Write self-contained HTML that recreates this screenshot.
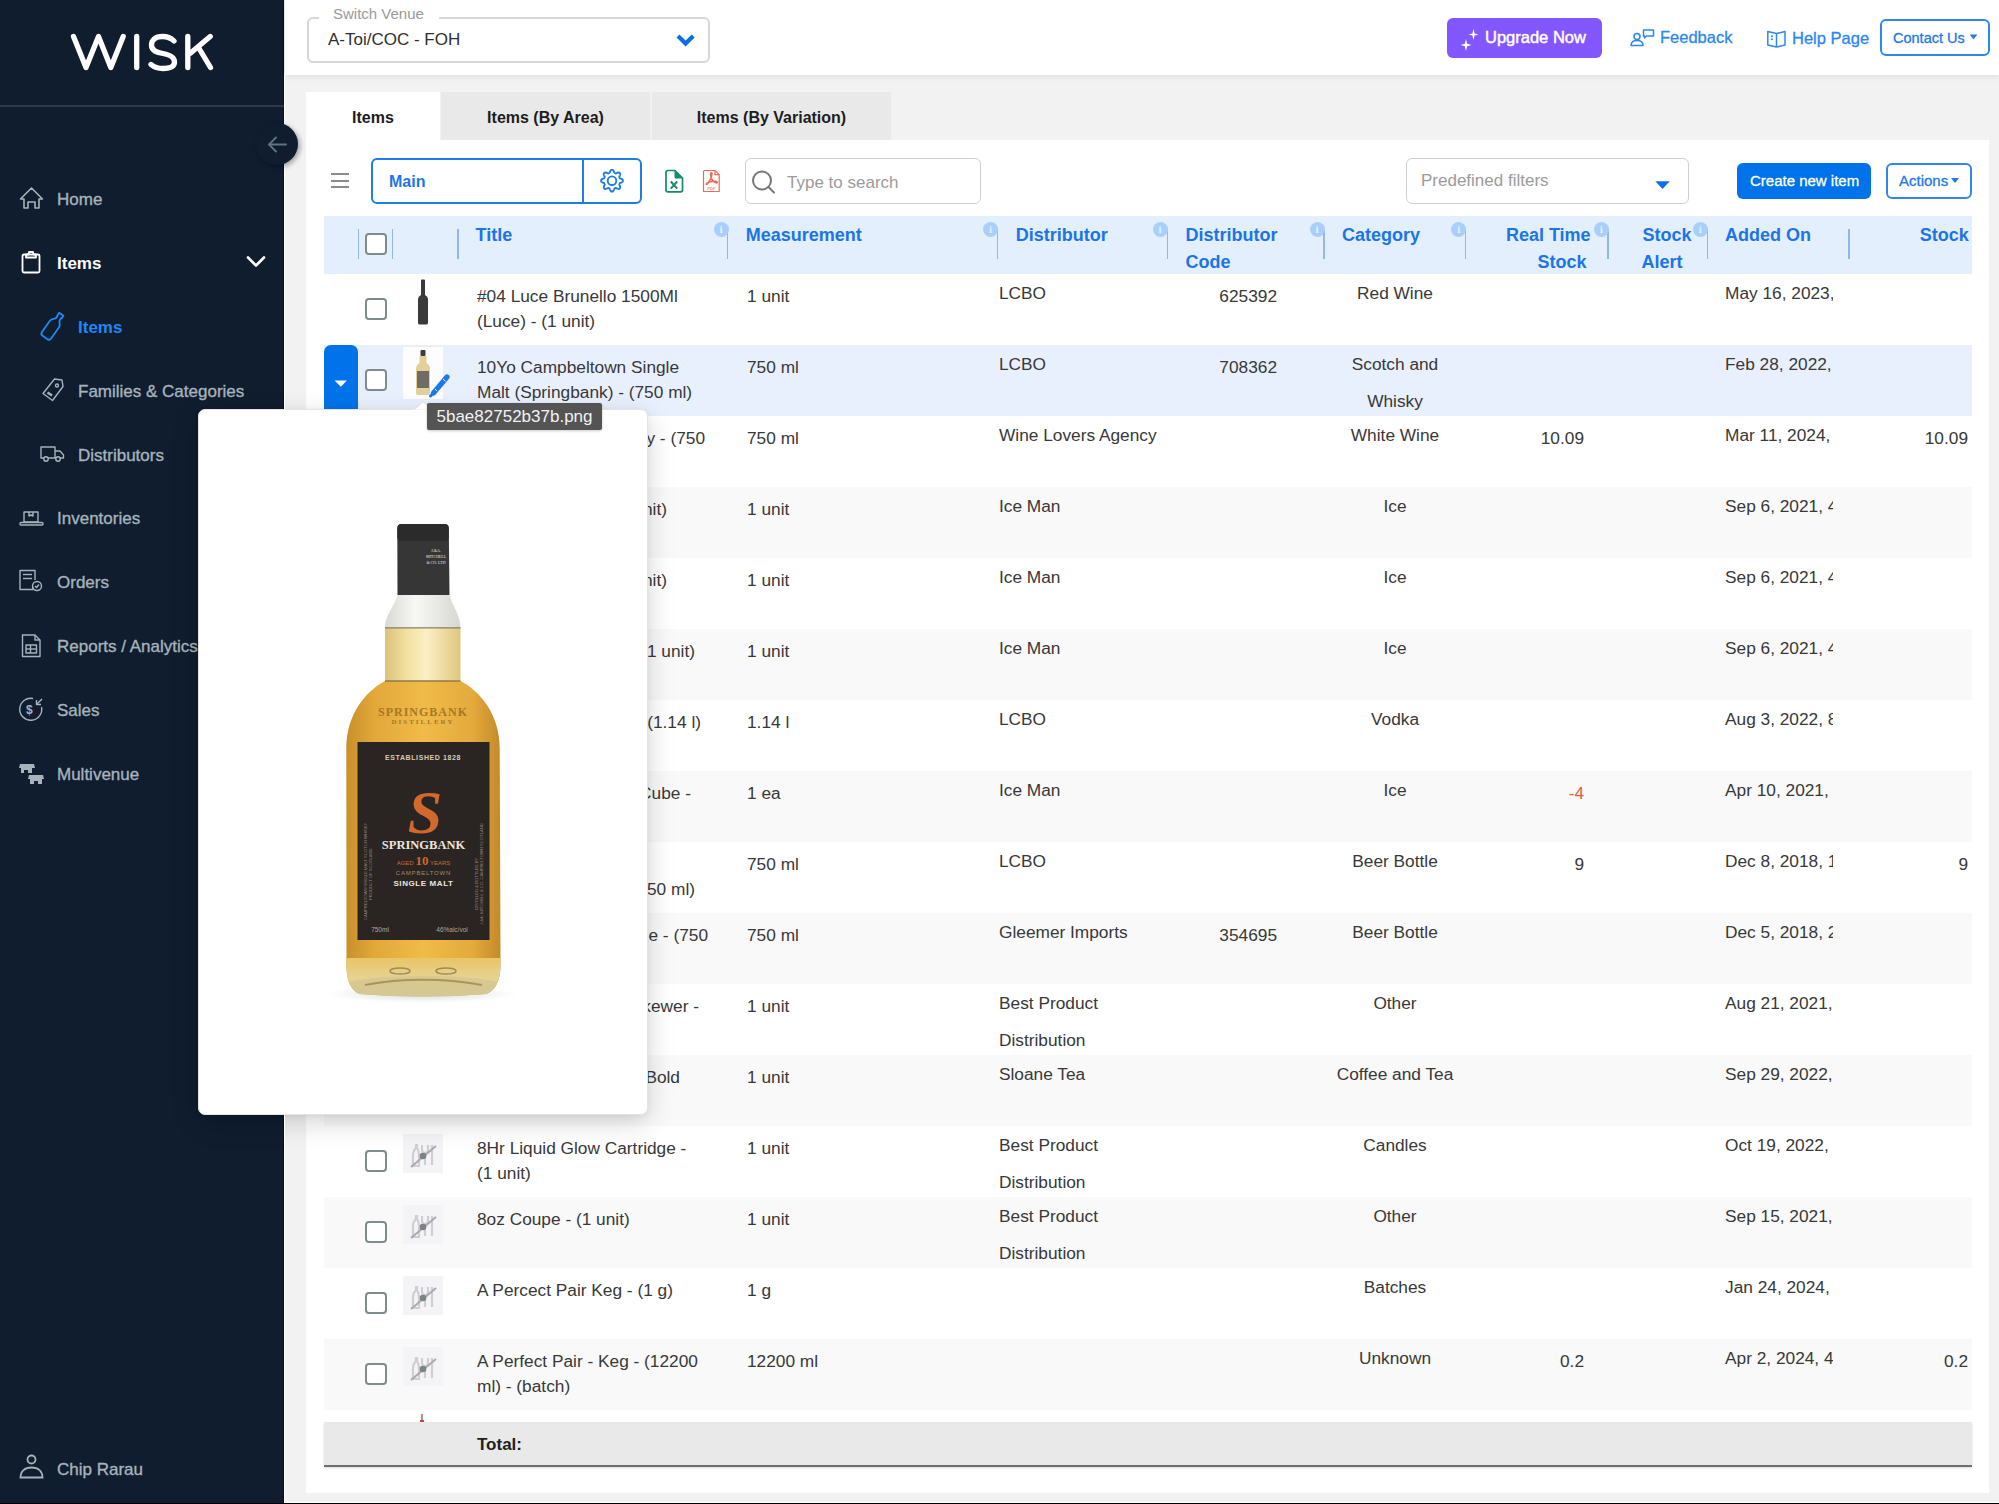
<!DOCTYPE html>
<html><head><meta charset="utf-8">
<style>
*{box-sizing:border-box;margin:0;padding:0}
html,body{width:1999px;height:1504px;overflow:hidden}
body{position:relative;background:#f2f2f2;font-family:"Liberation Sans",sans-serif;color:#383838}
.abs{position:absolute}
.t{position:absolute;white-space:nowrap;line-height:1}
#sb{position:absolute;left:0;top:0;width:284px;height:1504px;background:#0f1d2f;border-right:1px solid #07111c}
.nav{position:absolute;font-size:17px;color:#a6b3bb;white-space:nowrap;line-height:1;-webkit-text-stroke:.35px currentColor}
#hdr{position:absolute;left:285px;top:0;width:1714px;height:75px;background:#fff;box-shadow:0 2px 6px rgba(0,0,0,.08)}
#card{position:absolute;left:306px;top:140px;width:1683px;height:1353px;background:#fff}
.tab{position:absolute;top:92px;height:48px;background:#e9e9e9;font-size:16px;font-weight:bold;color:#1f1f1f;text-align:center;line-height:48px}
.th{position:absolute;font-size:18px;font-weight:bold;color:#1b74e8;line-height:27px;white-space:nowrap}
.dv{position:absolute;width:2px;background:#93bae6;top:230px;height:29px}
.info{position:absolute;width:15px;height:15px;border-radius:50%;background:#a8cffb;top:222px}
.info:after{content:"i";position:absolute;left:0;right:0;top:1px;text-align:center;color:#e6f1fd;font-size:11px;font-weight:bold;line-height:13px;font-family:"Liberation Serif",serif}
.row{position:absolute;left:324px;width:1648px;height:71px}
.cb{position:absolute;left:365px;width:22px;height:22px;border:2px solid #7e8c8c;border-radius:4px;background:#fff}
.c{position:absolute;font-size:17px;color:#333;white-space:nowrap;line-height:1}
.ml{line-height:25.5px}
.ml37{line-height:37px}
</style></head>
<body>
<!-- SIDEBAR -->
<div id="sb">
  <svg class="abs" style="left:0;top:0" width="284" height="110" viewBox="0 0 284 110">
    <g fill="none" stroke="#fff" stroke-width="5.3" stroke-linecap="round" stroke-linejoin="round">
      <polyline points="73.5,36.5 86,67.5 98.5,36.5 110.8,67.5 123.2,36.5"/>
      <line x1="136.7" y1="36.5" x2="136.7" y2="67.5"/>
      <path d="M174,41 C170,37 166,36.5 162.5,36.5 C155,36.5 151.5,40.5 151.5,45 C151.5,51 157,52.5 163,53.5 C170,54.8 174.5,57 174.5,62 C174.5,66.5 170,68.5 163,68.5 C158,68.5 154,67 151,64.5"/>
      <line x1="187.8" y1="36.5" x2="187.8" y2="67.5"/>
      <polyline points="210.2,36.5 190,53.5"/>
      <polyline points="198.5,47.5 210.5,67.5"/>
    </g>
    <rect x="0" y="105" width="284" height="2" fill="#2b3a47"/>
  </svg>
</div>
<!-- collapse circle -->
<div class="abs" style="z-index:5;left:256px;top:123px;width:42px;height:42px;border-radius:50%;background:#0f1d2f;box-shadow:2px 2px 5px rgba(0,0,0,.35)"></div>
<svg class="abs" style="z-index:6;left:262px;top:130px" width="30" height="30" viewBox="0 0 30 30"><g fill="none" stroke="#5d7483" stroke-width="1.8" stroke-linecap="round"><line x1="7" y1="14.5" x2="24" y2="14.5"/><polyline points="14,7.5 7,14.5 14,21.5"/></g></svg>

<!-- nav icons -->
<svg class="abs" style="left:0;top:170px" width="284" height="630" viewBox="0 170 284 630">
  <g fill="none" stroke="#a6b3bb" stroke-width="1.6" stroke-linejoin="round" stroke-linecap="round">
    <!-- home -->
    <path d="M20.5,199 L31.5,188 L42.5,199 L39,199 L39,208 L35,208 L35,202 L28,202 L28,208 L24,208 L24,199 Z"/>
  </g>
  <g fill="none" stroke="#ffffff" stroke-width="1.8" stroke-linejoin="round">
    <!-- clipboard -->
    <rect x="22.5" y="254.5" width="17" height="18" rx="1.5"/>
    <path d="M26,254.5 L26,257.5 L36,257.5 L36,254.5 L33.5,254.5 L33,252 L29,252 L28.5,254.5 Z"/>
    <polyline points="248,257.5 256,265.5 264,257.5" stroke-width="2.6" stroke-linecap="round"/>
  </g>
  <g fill="none" stroke="#1e88f5" stroke-width="1.8" stroke-linejoin="round">
    <!-- bottle -->
    <path transform="translate(53.2,325.8) rotate(35)" d="M-2.6,-14.2 L2.6,-14.2 L2.6,-11 L2.1,-11 L2.1,-8.5 C2.1,-6.2 5.6,-5.6 5.6,-2.2 L5.6,11.6 Q5.6,14.3 2.9,14.3 L-2.9,14.3 Q-5.6,14.3 -5.6,11.6 L-5.6,-2.2 C-5.6,-5.6 -2.1,-6.2 -2.1,-8.5 L-2.1,-11 L-2.6,-11 Z"/>
  </g>
  <g fill="none" stroke="#a6b3bb" stroke-width="1.4" stroke-linejoin="round">
    <!-- tag -->
    <path d="M54.5,379 L62,380 L63,386.5 L52.5,400.5 L43,393.5 Z"/>
    <circle cx="57" cy="385.5" r="1.5"/>
    <line x1="47.5" y1="392.5" x2="52" y2="395.5" stroke-width="2.4"/>
    <!-- truck -->
    <path d="M41,447 L55,447 L55,458 L41,458 Z"/>
    <path d="M55,451 L60,451 L63.5,455 L63.5,458 L55,458"/>
    <circle cx="46" cy="459" r="2.2" fill="#0f1d2f"/>
    <circle cx="58" cy="459" r="2.2" fill="#0f1d2f"/>
    <!-- inventories -->
    <path d="M24,512 L38,512 L38,522 L24,522 Z"/>
    <path d="M29,512 L29,516 L31,515 L33,516 L33,512"/>
    <rect x="20" y="522.5" width="23" height="2.5" rx="1"/>
    <!-- orders -->
    <path d="M33,587 L33,589.5 L20,589.5 L20,570.5 L35,570.5 L35,580"/>
    <line x1="23" y1="574.5" x2="32" y2="574.5"/><line x1="23" y1="578.5" x2="32" y2="578.5"/>
    <circle cx="37" cy="586" r="4.5"/>
    <polyline points="35,586 36.5,587.5 39,584.5"/>
    <!-- reports -->
    <path d="M22.5,635 L35,635 L40,640 L40,656.5 L22.5,656.5 Z"/>
    <path d="M35,635 L35,640 L40,640"/>
    <rect x="26" y="645" width="10.5" height="8"/>
    <line x1="26" y1="649" x2="36.5" y2="649"/><line x1="30.5" y1="645" x2="30.5" y2="653"/>
    <!-- sales -->
    <path d="M41.5,707 A11,11 0 1 1 33,698.5"/>
    <polyline points="42,699 36.5,704.5"/><polyline points="36.5,700 36.5,704.5 41,704.5"/>
    <text x="26" y="714" font-size="12" font-weight="bold" fill="#a6b3bb" stroke="none" font-family="Liberation Sans">$</text>
  </g>
  <g fill="#a6b3bb">
    <!-- multivenue -->
    <path d="M20,764 L34,764 L35,768 L19,768 Z"/><rect x="21" y="768" width="11" height="5"/>
    <path d="M29,775 L43,775 L44,779 L28,779 Z"/><rect x="30" y="779" width="12" height="5"/>
  </g>
  <g fill="#0f1d2f"><rect x="24" y="770" width="4" height="3"/><rect x="34" y="781" width="4" height="3"/></g>
</svg>

<div class="nav" style="left:57px;top:191px">Home</div>
<div class="nav" style="left:57px;top:255px;color:#fff;font-weight:bold;-webkit-text-stroke:0">Items</div>
<div class="nav" style="left:78px;top:319px;color:#1e88f5;font-weight:bold;-webkit-text-stroke:0">Items</div>
<div class="nav" style="left:78px;top:383px">Families &amp; Categories</div>
<div class="nav" style="left:78px;top:447px">Distributors</div>
<div class="nav" style="left:57px;top:510px">Inventories</div>
<div class="nav" style="left:57px;top:574px">Orders</div>
<div class="nav" style="left:57px;top:638px">Reports / Analytics</div>
<div class="nav" style="left:57px;top:702px">Sales</div>
<div class="nav" style="left:57px;top:766px">Multivenue</div>
<svg class="abs" style="left:18px;top:1452px" width="30" height="30" viewBox="0 0 30 30"><g fill="none" stroke="#a6b3bb" stroke-width="1.8"><circle cx="13.5" cy="7.5" r="4"/><path d="M2.5,25.5 C2.5,19 7,15.5 13.5,15.5 C20,15.5 24.5,19 24.5,25.5 Z"/></g></svg>
<div class="nav" style="left:57px;top:1461px">Chip Rarau</div>

<div id="hdr"></div>
<div class="abs" style="left:307px;top:17px;width:403px;height:46px;border:2px solid #d7d7d7;border-radius:6px"></div>
<div class="abs" style="left:319px;top:10px;width:120px;height:12px;background:#fff"></div>
<div class="t" style="left:333.0px;top:5.8px;font-size:15px;color:#9a9a9a">Switch Venue</div>
<div class="t" style="left:328.0px;top:30.6px;font-size:17px;color:#2f2f2f">A-Toi/COC - FOH</div>
<svg class="abs" style="left:670px;top:28px" width="32" height="26" viewBox="670 28 32 26"><polyline points="679.5,37.5 685.6,43.6 691.7,37.5" fill="none" stroke="#0a6fe6" stroke-width="4.2" stroke-linecap="square"/></svg>
<div class="abs" style="left:1447px;top:17.5px;width:155px;height:40px;background:#8257fe;border-radius:6px"></div>
<svg class="abs" style="left:1455px;top:24px" width="30" height="30" viewBox="1455 24 30 30"><g fill="#fff"><path d="M1473.5,29 L1474.6,33.4 L1478.5,34.5 L1474.6,35.6 L1473.5,40 L1472.4,35.6 L1468.5,34.5 L1472.4,33.4 Z"/><path d="M1466,39 L1467.2,43.8 L1471.5,45 L1467.2,46.2 L1466,51 L1464.8,46.2 L1460.5,45 L1464.8,43.8 Z"/></g></svg>
<div class="t" style="left:1485.0px;top:29.3px;font-size:16.5px;color:#fff;-webkit-text-stroke:.45px #fff">Upgrade Now</div>
<svg class="abs" style="left:1628px;top:26px" width="30" height="24" viewBox="1628 26 30 24"><g fill="none" stroke="#2b87f3" stroke-width="1.5" stroke-linejoin="round"><circle cx="1637" cy="36.5" r="3"/><path d="M1631,45.5 C1631,41.5 1633.5,40.5 1637,40.5 C1640.5,40.5 1643,41.5 1643,45.5 Z"/><path d="M1643.5,30 L1653.5,30 L1653.5,36 L1646.5,36 L1644.5,38 L1644.5,36 L1643.5,36 Z"/></g></svg>
<div class="t" style="left:1660.0px;top:29.3px;font-size:16.5px;color:#2b87f3;-webkit-text-stroke:.3px #2b87f3">Feedback</div>
<svg class="abs" style="left:1764px;top:27px" width="24" height="24" viewBox="1764 27 24 24"><g fill="none" stroke="#2b87f3" stroke-width="1.5" stroke-linejoin="round"><path d="M1767.8,31.5 L1776.5,33.5 L1785,31.5 L1785,45 L1776.5,47 L1767.8,45 Z"/><line x1="1776.5" y1="33.5" x2="1776.5" y2="47"/><line x1="1771" y1="36" x2="1773" y2="36.5"/><line x1="1771" y1="39" x2="1773" y2="39.5"/></g></svg>
<div class="t" style="left:1792.0px;top:29.6px;font-size:16.5px;color:#2b87f3;-webkit-text-stroke:.3px #2b87f3">Help Page</div>
<div class="abs" style="left:1880px;top:19px;width:110px;height:37px;border:2px solid #2f86f0;border-radius:6px"></div>
<div class="t" style="left:1893.0px;top:30.7px;font-size:14.5px;color:#2479e6;-webkit-text-stroke:.3px #2479e6">Contact Us</div>
<svg class="abs" style="left:1968px;top:33px" width="12" height="10" viewBox="1968 33 12 10"><path d="M1969.8,34.5 L1977.3,34.5 L1973.5,39.5 Z" fill="#2479e6"/></svg>
<div class="abs" style="left:306px;top:92px;width:134px;height:48px;background:#fff"></div>
<div class="abs" style="left:441px;top:92px;width:209px;height:48px;background:#e9e9e9"></div>
<div class="abs" style="left:652px;top:92px;width:239px;height:48px;background:#e9e9e9"></div>
<div class="t" style="left:73.0px;width:600px;text-align:center;top:109.9px;font-size:16px;font-weight:bold;color:#1d1d1d">Items</div>
<div class="t" style="left:245.5px;width:600px;text-align:center;top:109.9px;font-size:16px;font-weight:bold;color:#1d1d1d">Items (By Area)</div>
<div class="t" style="left:471.5px;width:600px;text-align:center;top:109.9px;font-size:16px;font-weight:bold;color:#1d1d1d">Items (By Variation)</div>
<div id="card"></div>
<div class="abs" style="left:331px;top:173.2px;width:18px;height:2.2px;background:#8a8a8a"></div><div class="abs" style="left:331px;top:179.5px;width:18px;height:2.2px;background:#8a8a8a"></div><div class="abs" style="left:331px;top:185.9px;width:18px;height:2.2px;background:#8a8a8a"></div>
<div class="abs" style="left:371px;top:158px;width:271px;height:46px;border:2px solid #1d7de9;border-radius:6px"></div>
<div class="abs" style="left:581.8px;top:158px;width:2px;height:46px;background:#1d7de9"></div>
<div class="t" style="left:389.0px;top:173.9px;font-size:16px;font-weight:bold;color:#1b76e8">Main</div>
<svg class="abs" style="left:596px;top:165px" width="32" height="32" viewBox="596 165 32 32"><g fill="none" stroke="#1d7de9" stroke-width="1.9" stroke-linejoin="round"><path d="M622.85,180.70 L622.85,180.98 L622.84,181.27 L622.82,181.55 L622.57,181.81 L622.26,182.05 L621.90,182.27 L621.51,182.46 L621.12,182.64 L620.73,182.80 L620.36,182.94 L620.03,183.08 L619.75,183.22 L619.68,183.42 L619.61,183.62 L619.53,183.82 L619.45,184.01 L619.36,184.21 L619.26,184.40 L619.36,184.69 L619.50,185.03 L619.66,185.39 L619.82,185.78 L619.97,186.18 L620.11,186.59 L620.21,187.00 L620.26,187.39 L620.25,187.75 L620.06,187.96 L619.87,188.17 L619.67,188.37 L619.47,188.57 L619.26,188.76 L619.05,188.95 L618.69,188.96 L618.30,188.91 L617.89,188.81 L617.48,188.67 L617.08,188.52 L616.69,188.36 L616.33,188.20 L615.99,188.06 L615.70,187.96 L615.51,188.06 L615.31,188.15 L615.12,188.23 L614.92,188.31 L614.72,188.38 L614.52,188.45 L614.38,188.73 L614.24,189.06 L614.10,189.43 L613.94,189.82 L613.76,190.21 L613.57,190.60 L613.35,190.96 L613.11,191.27 L612.85,191.52 L612.57,191.54 L612.28,191.55 L612.00,191.55 L611.72,191.55 L611.43,191.54 L611.15,191.52 L610.89,191.27 L610.65,190.96 L610.43,190.60 L610.24,190.21 L610.06,189.82 L609.90,189.43 L609.76,189.06 L609.62,188.73 L609.48,188.45 L609.28,188.38 L609.08,188.31 L608.88,188.23 L608.69,188.15 L608.49,188.06 L608.30,187.96 L608.01,188.06 L607.67,188.20 L607.31,188.36 L606.92,188.52 L606.52,188.67 L606.11,188.81 L605.70,188.91 L605.31,188.96 L604.95,188.95 L604.74,188.76 L604.53,188.57 L604.33,188.37 L604.13,188.17 L603.94,187.96 L603.75,187.75 L603.74,187.39 L603.79,187.00 L603.89,186.59 L604.03,186.18 L604.18,185.78 L604.34,185.39 L604.50,185.03 L604.64,184.69 L604.74,184.40 L604.64,184.21 L604.55,184.01 L604.47,183.82 L604.39,183.62 L604.32,183.42 L604.25,183.22 L603.97,183.08 L603.64,182.94 L603.27,182.80 L602.88,182.64 L602.49,182.46 L602.10,182.27 L601.74,182.05 L601.43,181.81 L601.18,181.55 L601.16,181.27 L601.15,180.98 L601.15,180.70 L601.15,180.42 L601.16,180.13 L601.18,179.85 L601.43,179.59 L601.74,179.35 L602.10,179.13 L602.49,178.94 L602.88,178.76 L603.27,178.60 L603.64,178.46 L603.97,178.32 L604.25,178.18 L604.32,177.98 L604.39,177.78 L604.47,177.58 L604.55,177.39 L604.64,177.19 L604.74,177.00 L604.64,176.71 L604.50,176.37 L604.34,176.01 L604.18,175.62 L604.03,175.22 L603.89,174.81 L603.79,174.40 L603.74,174.01 L603.75,173.65 L603.94,173.44 L604.13,173.23 L604.33,173.03 L604.53,172.83 L604.74,172.64 L604.95,172.45 L605.31,172.44 L605.70,172.49 L606.11,172.59 L606.52,172.73 L606.92,172.88 L607.31,173.04 L607.67,173.20 L608.01,173.34 L608.30,173.44 L608.49,173.34 L608.69,173.25 L608.88,173.17 L609.08,173.09 L609.28,173.02 L609.48,172.95 L609.62,172.67 L609.76,172.34 L609.90,171.97 L610.06,171.58 L610.24,171.19 L610.43,170.80 L610.65,170.44 L610.89,170.13 L611.15,169.88 L611.43,169.86 L611.72,169.85 L612.00,169.85 L612.28,169.85 L612.57,169.86 L612.85,169.88 L613.11,170.13 L613.35,170.44 L613.57,170.80 L613.76,171.19 L613.94,171.58 L614.10,171.97 L614.24,172.34 L614.38,172.67 L614.52,172.95 L614.72,173.02 L614.92,173.09 L615.12,173.17 L615.31,173.25 L615.51,173.34 L615.70,173.44 L615.99,173.34 L616.33,173.20 L616.69,173.04 L617.08,172.88 L617.48,172.73 L617.89,172.59 L618.30,172.49 L618.69,172.44 L619.05,172.45 L619.26,172.64 L619.47,172.83 L619.67,173.03 L619.87,173.23 L620.06,173.44 L620.25,173.65 L620.26,174.01 L620.21,174.40 L620.11,174.81 L619.97,175.22 L619.82,175.62 L619.66,176.01 L619.50,176.37 L619.36,176.71 L619.26,177.00 L619.36,177.19 L619.45,177.39 L619.53,177.58 L619.61,177.78 L619.68,177.98 L619.75,178.18 L620.03,178.32 L620.36,178.46 L620.73,178.60 L621.12,178.76 L621.51,178.94 L621.90,179.13 L622.26,179.35 L622.57,179.59 L622.82,179.85 L622.84,180.13 L622.85,180.42 Z"/><circle cx="612" cy="180.7" r="4.3"/></g></svg>
<svg class="abs" style="left:662px;top:167px" width="26" height="28" viewBox="662 167 26 28"><g><path d="M667,170.5 L675,170.5 L682.5,178 L682.5,190 Q682.5,191.8 680.7,191.8 L667.8,191.8 Q666,191.8 666,190 L666,172.3 Q666,170.5 667.8,170.5 Z" fill="none" stroke="#178a68" stroke-width="1.7"/><path d="M674.5,170.5 L682.5,178.5 L676,178.5 Q674.5,178.5 674.5,177 Z" fill="#178a68"/><path d="M670.8,181.5 L677.2,188.7 M677.2,181.5 L670.8,188.7" stroke="#178a68" stroke-width="2"/></g></svg>
<svg class="abs" style="left:700px;top:167px" width="24" height="28" viewBox="700 167 24 28"><g fill="none" stroke="#ef6a55" stroke-width="1.2"><path d="M704.5,170.5 L715,170.5 L719.2,174.7 L719.2,191.5 L703.5,191.5 L703.5,171.5 Q703.5,170.5 704.5,170.5 Z"/><path d="M715,170.5 L715,174.7 L719.2,174.7"/><path d="M711.5,172.8 C710.2,172.8 710.4,176 711.5,178.5 C712.8,181 715,182.8 716.6,183 C717.8,183.2 717.6,181.6 715.5,181.3 C713,181 709,181.8 706.8,183.3 C705.6,184.2 706.3,185 707.3,184 C709,182.2 710.6,179.5 711.3,177 C711.8,175 712.4,172.8 711.5,172.8 Z" stroke-width="1.5"/><text x="711.4" y="189.6" font-size="4.2" font-weight="bold" fill="#f29a8a" stroke="none" text-anchor="middle" font-family="Liberation Sans">PDF</text></g></svg>
<div class="abs" style="left:744.5px;top:158px;width:236.5px;height:46px;border:1.6px solid #cfcfcf;border-radius:6px"></div>
<svg class="abs" style="left:748px;top:166px" width="32" height="32" viewBox="748 166 32 32"><g fill="none" stroke="#777" stroke-width="2" stroke-linecap="round"><circle cx="762" cy="180.5" r="9"/><line x1="768.5" y1="187" x2="774" y2="192.5"/></g></svg>
<div class="t" style="left:787.0px;top:174.4px;font-size:17px;color:#9b9b9b">Type to search</div>
<div class="abs" style="left:1405.5px;top:158px;width:283.5px;height:46px;border:1.6px solid #cfcfcf;border-radius:6px"></div>
<div class="t" style="left:1421.0px;top:172.2px;font-size:17px;color:#9b9b9b">Predefined filters</div>
<svg class="abs" style="left:1652px;top:178px" width="20" height="14" viewBox="1652 178 20 14"><path d="M1655.3,181.3 L1669.8,181.3 L1662.5,189 Z" fill="#0f6fe6"/></svg>
<div class="abs" style="left:1737px;top:162.6px;width:134px;height:36.6px;background:#0073ea;border-radius:6px"></div>
<div class="t" style="left:1750.0px;top:173.3px;font-size:15px;color:#fff;-webkit-text-stroke:.3px #fff">Create new item</div>
<div class="abs" style="left:1886px;top:163px;width:86px;height:36.2px;border:2px solid #2f86f0;border-radius:6px"></div>
<div class="t" style="left:1899.0px;top:173.3px;font-size:15px;color:#2479e6;-webkit-text-stroke:.3px #2479e6">Actions</div>
<svg class="abs" style="left:1948px;top:175px" width="14" height="10" viewBox="1948 175 14 10"><path d="M1951,178 L1959,178 L1955,183 Z" fill="#2479e6"/></svg>
<div class="abs" style="left:324px;top:216px;width:1648px;height:58px;background:#e3effc"></div>
<div class="abs" style="left:357.55px;top:229px;width:1.5px;height:30px;background:#8fb8e8"></div>
<div class="abs" style="left:391.75px;top:229px;width:1.5px;height:30px;background:#8fb8e8"></div>
<div class="abs" style="left:457.05px;top:229px;width:1.5px;height:30px;background:#8fb8e8"></div>
<div class="abs" style="left:726.55px;top:229px;width:1.5px;height:30px;background:#8fb8e8"></div>
<div class="abs" style="left:996.75px;top:229px;width:1.5px;height:30px;background:#8fb8e8"></div>
<div class="abs" style="left:1166.85px;top:229px;width:1.5px;height:30px;background:#8fb8e8"></div>
<div class="abs" style="left:1323.25px;top:229px;width:1.5px;height:30px;background:#8fb8e8"></div>
<div class="abs" style="left:1464.95px;top:229px;width:1.5px;height:30px;background:#8fb8e8"></div>
<div class="abs" style="left:1607.25px;top:229px;width:1.5px;height:30px;background:#8fb8e8"></div>
<div class="abs" style="left:1706.55px;top:229px;width:1.5px;height:30px;background:#8fb8e8"></div>
<div class="abs" style="left:1848.25px;top:229px;width:1.5px;height:30px;background:#8fb8e8"></div>
<div class="info" style="left:713.5px;top:221.7px"></div>
<div class="info" style="left:983.1px;top:221.7px"></div>
<div class="info" style="left:1152.5px;top:221.7px"></div>
<div class="info" style="left:1309.5px;top:221.7px"></div>
<div class="info" style="left:1451.3px;top:221.7px"></div>
<div class="info" style="left:1593.9px;top:221.7px"></div>
<div class="info" style="left:1692.8px;top:221.7px"></div>
<div class="cb" style="left:365.2px;top:233px"></div>
<div class="t" style="left:475.5px;top:226.0px;font-size:18px;font-weight:bold;color:#1b74e8">Title</div>
<div class="t" style="left:745.7px;top:226.0px;font-size:18px;font-weight:bold;color:#1b74e8">Measurement</div>
<div class="t" style="left:1015.7px;top:226.0px;font-size:18px;font-weight:bold;color:#1b74e8">Distributor</div>
<div class="t" style="left:1185.4px;top:226.0px;font-size:18px;font-weight:bold;color:#1b74e8">Distributor</div>
<div class="t" style="left:1185.4px;top:253.4px;font-size:18px;font-weight:bold;color:#1b74e8">Code</div>
<div class="t" style="left:1341.9px;top:226.0px;font-size:18px;font-weight:bold;color:#1b74e8">Category</div>
<div class="t" style="right:408.4px;top:226.0px;font-size:18px;font-weight:bold;color:#1b74e8">Real Time</div>
<div class="t" style="right:412.5px;top:253.4px;font-size:18px;font-weight:bold;color:#1b74e8">Stock</div>
<div class="t" style="left:1642.6px;top:226.0px;font-size:18px;font-weight:bold;color:#1b74e8">Stock</div>
<div class="t" style="left:1641.6px;top:253.4px;font-size:18px;font-weight:bold;color:#1b74e8">Alert</div>
<div class="t" style="left:1725.0px;top:226.0px;font-size:18px;font-weight:bold;color:#1b74e8">Added On</div>
<div class="t" style="right:30.2px;top:226.0px;font-size:18px;font-weight:bold;color:#1b74e8">Stock</div>
<div class="row" style="top:274.0px;background:#ffffff"></div>
<div class="cb" style="top:298.0px"></div>
<div class="t" style="left:477.0px;top:287.7px;font-size:17.3px;">#04 Luce Brunello 1500Ml</div>
<div class="t" style="left:477.0px;top:313.2px;font-size:17.3px;">(Luce) - (1 unit)</div>
<div class="t" style="left:747.0px;top:287.7px;font-size:17.3px;">1 unit</div>
<div class="t" style="left:999.0px;top:285.1px;font-size:17.3px;">LCBO</div>
<div class="t" style="right:722.0px;top:287.7px;font-size:17.3px;">625392</div>
<div class="t" style="left:1095.0px;width:600px;text-align:center;top:285.1px;font-size:17.3px;">Red Wine</div>
<div class="abs" style="left:1725px;top:285.1px;width:108px;height:22px;overflow:hidden"><div class="t" style="left:0;top:0;font-size:17.3px">May 16, 2023, 4:12 PM</div></div>
<svg class="abs" style="left:410px;top:278.0px" width="26" height="48" viewBox="0 0 26 48"><path d="M11,2 Q11,1.5 12,1.5 L14,1.5 Q15,1.5 15,2 L15,17 Q18,18.5 18,21 L18,45 Q18,46.5 16,46.5 L10,46.5 Q8,46.5 8,45 L8,21 Q8,18.5 11,17 Z" fill="#3a3a3a"/></svg>
<div class="row" style="top:345.0px;background:#e9f0fd"></div>
<div class="cb" style="top:369.0px"></div>
<div class="t" style="left:477.0px;top:358.7px;font-size:17.3px;">10Yo Campbeltown Single</div>
<div class="t" style="left:477.0px;top:384.2px;font-size:17.3px;">Malt (Springbank) - (750 ml)</div>
<div class="t" style="left:747.0px;top:358.7px;font-size:17.3px;">750 ml</div>
<div class="t" style="left:999.0px;top:356.1px;font-size:17.3px;">LCBO</div>
<div class="t" style="right:722.0px;top:358.7px;font-size:17.3px;">708362</div>
<div class="t" style="left:1095.0px;width:600px;text-align:center;top:356.1px;font-size:17.3px;">Scotch and</div>
<div class="t" style="left:1095.0px;width:600px;text-align:center;top:393.1px;font-size:17.3px;">Whisky</div>
<div class="abs" style="left:1725px;top:356.1px;width:108px;height:22px;overflow:hidden"><div class="t" style="left:0;top:0;font-size:17.3px">Feb 28, 2022, 1:15 PM</div></div>
<div class="abs" style="left:403px;top:347.0px;width:40px;height:52px;background:#fdfdfe"></div>
<svg class="abs" style="left:403px;top:347.0px" width="60" height="52" viewBox="0 0 60 52"><rect x="17.5" y="3" width="5" height="6" rx="1" fill="#3b3b3b"/><path d="M16.5,9 L23.5,9 L23.5,16 Q27,18 27,22 L27,46 Q27,48 25,48 L15,48 Q13,48 13,46 L13,22 Q13,18 16.5,16 Z" fill="#e2cf9a"/><rect x="14" y="24" width="12" height="17" fill="#6f6c66"/><line x1="30.5" y1="46" x2="44" y2="30" stroke="#1f7ae9" stroke-width="5.2" stroke-linecap="round"/><line x1="27.5" y1="49" x2="31.5" y2="45" stroke="#1f7ae9" stroke-width="3" stroke-linecap="round"/><line x1="40" y1="32" x2="42.5" y2="34.5" stroke="#e9f0fd" stroke-width="1"/><line x1="32" y1="42" x2="34" y2="44" stroke="#e9f0fd" stroke-width="1"/></svg>
<div class="row" style="top:416.0px;background:#ffffff"></div>
<div class="cb" style="top:440.0px"></div>
<div class="t" style="right:1294.0px;top:429.7px;font-size:17.3px;">Whisky - (750</div>
<div class="t" style="left:747.0px;top:429.7px;font-size:17.3px;">750 ml</div>
<div class="t" style="left:999.0px;top:427.1px;font-size:17.3px;">Wine Lovers Agency</div>
<div class="t" style="left:1095.0px;width:600px;text-align:center;top:427.1px;font-size:17.3px;">White Wine</div>
<div class="t" style="right:415.0px;top:429.7px;font-size:17.3px;">10.09</div>
<div class="abs" style="left:1725px;top:427.1px;width:108px;height:22px;overflow:hidden"><div class="t" style="left:0;top:0;font-size:17.3px">Mar 11, 2024, 2:01 PM</div></div>
<div class="t" style="right:31.0px;top:429.7px;font-size:17.3px;">10.09</div>
<div class="row" style="top:487.0px;background:#f9f9f9"></div>
<div class="cb" style="top:511.0px"></div>
<div class="t" style="right:1332.0px;top:500.7px;font-size:17.3px;">(1 unit)</div>
<div class="t" style="left:747.0px;top:500.7px;font-size:17.3px;">1 unit</div>
<div class="t" style="left:999.0px;top:498.1px;font-size:17.3px;">Ice Man</div>
<div class="t" style="left:1095.0px;width:600px;text-align:center;top:498.1px;font-size:17.3px;">Ice</div>
<div class="abs" style="left:1725px;top:498.1px;width:108px;height:22px;overflow:hidden"><div class="t" style="left:0;top:0;font-size:17.3px">Sep 6, 2021, 4:40 PM</div></div>
<div class="row" style="top:558.0px;background:#ffffff"></div>
<div class="cb" style="top:582.0px"></div>
<div class="t" style="right:1332.0px;top:571.7px;font-size:17.3px;">(1 unit)</div>
<div class="t" style="left:747.0px;top:571.7px;font-size:17.3px;">1 unit</div>
<div class="t" style="left:999.0px;top:569.1px;font-size:17.3px;">Ice Man</div>
<div class="t" style="left:1095.0px;width:600px;text-align:center;top:569.1px;font-size:17.3px;">Ice</div>
<div class="abs" style="left:1725px;top:569.1px;width:108px;height:22px;overflow:hidden"><div class="t" style="left:0;top:0;font-size:17.3px">Sep 6, 2021, 4:40 PM</div></div>
<div class="row" style="top:629.0px;background:#f9f9f9"></div>
<div class="cb" style="top:653.0px"></div>
<div class="t" style="right:1304.0px;top:642.7px;font-size:17.3px;">Cubes - (1 unit)</div>
<div class="t" style="left:747.0px;top:642.7px;font-size:17.3px;">1 unit</div>
<div class="t" style="left:999.0px;top:640.1px;font-size:17.3px;">Ice Man</div>
<div class="t" style="left:1095.0px;width:600px;text-align:center;top:640.1px;font-size:17.3px;">Ice</div>
<div class="abs" style="left:1725px;top:640.1px;width:108px;height:22px;overflow:hidden"><div class="t" style="left:0;top:0;font-size:17.3px">Sep 6, 2021, 4:40 PM</div></div>
<div class="row" style="top:700.0px;background:#ffffff"></div>
<div class="cb" style="top:724.0px"></div>
<div class="t" style="right:1298.0px;top:713.7px;font-size:17.3px;">Vodka - (1.14 l)</div>
<div class="t" style="left:747.0px;top:713.7px;font-size:17.3px;">1.14 l</div>
<div class="t" style="left:999.0px;top:711.1px;font-size:17.3px;">LCBO</div>
<div class="t" style="left:1095.0px;width:600px;text-align:center;top:711.1px;font-size:17.3px;">Vodka</div>
<div class="abs" style="left:1725px;top:711.1px;width:108px;height:22px;overflow:hidden"><div class="t" style="left:0;top:0;font-size:17.3px">Aug 3, 2022, 8:30 AM</div></div>
<div class="row" style="top:771.0px;background:#f9f9f9"></div>
<div class="cb" style="top:795.0px"></div>
<div class="t" style="right:1308.0px;top:784.7px;font-size:17.3px;">Ice Cube -</div>
<div class="t" style="left:747.0px;top:784.7px;font-size:17.3px;">1 ea</div>
<div class="t" style="left:999.0px;top:782.1px;font-size:17.3px;">Ice Man</div>
<div class="t" style="left:1095.0px;width:600px;text-align:center;top:782.1px;font-size:17.3px;">Ice</div>
<div class="t" style="right:415.0px;top:784.7px;font-size:17.3px;"><span style="color:#ee5a3c">-4</span></div>
<div class="abs" style="left:1725px;top:782.1px;width:108px;height:22px;overflow:hidden"><div class="t" style="left:0;top:0;font-size:17.3px">Apr 10, 2021, 3:00 PM</div></div>
<div class="row" style="top:842.0px;background:#ffffff"></div>
<div class="cb" style="top:866.0px"></div>
<div class="t" style="right:1304.0px;top:881.2px;font-size:17.3px;">(750 ml)</div>
<div class="t" style="left:747.0px;top:855.7px;font-size:17.3px;">750 ml</div>
<div class="t" style="left:999.0px;top:853.1px;font-size:17.3px;">LCBO</div>
<div class="t" style="left:1095.0px;width:600px;text-align:center;top:853.1px;font-size:17.3px;">Beer Bottle</div>
<div class="t" style="right:415.0px;top:855.7px;font-size:17.3px;">9</div>
<div class="abs" style="left:1725px;top:853.1px;width:108px;height:22px;overflow:hidden"><div class="t" style="left:0;top:0;font-size:17.3px">Dec 8, 2018, 1:20 PM</div></div>
<div class="t" style="right:31.0px;top:855.7px;font-size:17.3px;">9</div>
<div class="row" style="top:913.0px;background:#f9f9f9"></div>
<div class="cb" style="top:937.0px"></div>
<div class="t" style="right:1291.0px;top:926.7px;font-size:17.3px;">Bottle - (750</div>
<div class="t" style="left:747.0px;top:926.7px;font-size:17.3px;">750 ml</div>
<div class="t" style="left:999.0px;top:924.1px;font-size:17.3px;">Gleemer Imports</div>
<div class="t" style="right:722.0px;top:926.7px;font-size:17.3px;">354695</div>
<div class="t" style="left:1095.0px;width:600px;text-align:center;top:924.1px;font-size:17.3px;">Beer Bottle</div>
<div class="abs" style="left:1725px;top:924.1px;width:108px;height:22px;overflow:hidden"><div class="t" style="left:0;top:0;font-size:17.3px">Dec 5, 2018, 2:20 PM</div></div>
<div class="row" style="top:984.0px;background:#ffffff"></div>
<div class="cb" style="top:1008.0px"></div>
<div class="t" style="right:1300.0px;top:997.7px;font-size:17.3px;">Skewer -</div>
<div class="t" style="left:747.0px;top:997.7px;font-size:17.3px;">1 unit</div>
<div class="t" style="left:999.0px;top:995.1px;font-size:17.3px;">Best Product</div>
<div class="t" style="left:999.0px;top:1032.1px;font-size:17.3px;">Distribution</div>
<div class="t" style="left:1095.0px;width:600px;text-align:center;top:995.1px;font-size:17.3px;">Other</div>
<div class="abs" style="left:1725px;top:995.1px;width:108px;height:22px;overflow:hidden"><div class="t" style="left:0;top:0;font-size:17.3px">Aug 21, 2021, 1:00 PM</div></div>
<div class="row" style="top:1055.0px;background:#f9f9f9"></div>
<div class="cb" style="top:1079.0px"></div>
<div class="t" style="right:1319.0px;top:1068.7px;font-size:17.3px;">Tea Bold</div>
<div class="t" style="left:747.0px;top:1068.7px;font-size:17.3px;">1 unit</div>
<div class="t" style="left:999.0px;top:1066.1px;font-size:17.3px;">Sloane Tea</div>
<div class="t" style="left:1095.0px;width:600px;text-align:center;top:1066.1px;font-size:17.3px;">Coffee and Tea</div>
<div class="abs" style="left:1725px;top:1066.1px;width:108px;height:22px;overflow:hidden"><div class="t" style="left:0;top:0;font-size:17.3px">Sep 29, 2022, 9:00 AM</div></div>
<div class="row" style="top:1126.0px;background:#ffffff"></div>
<div class="cb" style="top:1150.0px"></div>
<div class="t" style="left:477.0px;top:1139.7px;font-size:17.3px;">8Hr Liquid Glow Cartridge -</div>
<div class="t" style="left:477.0px;top:1165.2px;font-size:17.3px;">(1 unit)</div>
<div class="t" style="left:747.0px;top:1139.7px;font-size:17.3px;">1 unit</div>
<div class="t" style="left:999.0px;top:1137.1px;font-size:17.3px;">Best Product</div>
<div class="t" style="left:999.0px;top:1174.1px;font-size:17.3px;">Distribution</div>
<div class="t" style="left:1095.0px;width:600px;text-align:center;top:1137.1px;font-size:17.3px;">Candles</div>
<div class="abs" style="left:1725px;top:1137.1px;width:108px;height:22px;overflow:hidden"><div class="t" style="left:0;top:0;font-size:17.3px">Oct 19, 2022, 2:00 PM</div></div>
<div class="abs" style="left:403px;top:1134.0px;width:40px;height:39px;background:#f4f4f7"></div>
<svg class="abs" style="left:403px;top:1134.0px" width="40" height="39" viewBox="0 0 40 39"><g fill="none" stroke="#cfcfd3" stroke-width="2.2"><path d="M13,10 L13,14 Q10,17 10,21 L10,32 L16,32 L16,21 Q16,17 14,14 L14,10"/><path d="M19,11 L19,16 Q19,19 22,19 Q25,19 25,16 L25,11 M22,19 L22,31"/><path d="M29,11 L29,31"/></g><line x1="8" y1="33" x2="33" y2="12" stroke="#a9a9ae" stroke-width="2"/><circle cx="20" cy="22" r="3.3" fill="#7a8484"/></svg>
<div class="row" style="top:1197.0px;background:#f9f9f9"></div>
<div class="cb" style="top:1221.0px"></div>
<div class="t" style="left:477.0px;top:1210.7px;font-size:17.3px;">8oz Coupe - (1 unit)</div>
<div class="t" style="left:747.0px;top:1210.7px;font-size:17.3px;">1 unit</div>
<div class="t" style="left:999.0px;top:1208.1px;font-size:17.3px;">Best Product</div>
<div class="t" style="left:999.0px;top:1245.1px;font-size:17.3px;">Distribution</div>
<div class="t" style="left:1095.0px;width:600px;text-align:center;top:1208.1px;font-size:17.3px;">Other</div>
<div class="abs" style="left:1725px;top:1208.1px;width:108px;height:22px;overflow:hidden"><div class="t" style="left:0;top:0;font-size:17.3px">Sep 15, 2021, 3:00 PM</div></div>
<div class="abs" style="left:403px;top:1205.0px;width:40px;height:39px;background:#f4f4f7"></div>
<svg class="abs" style="left:403px;top:1205.0px" width="40" height="39" viewBox="0 0 40 39"><g fill="none" stroke="#cfcfd3" stroke-width="2.2"><path d="M13,10 L13,14 Q10,17 10,21 L10,32 L16,32 L16,21 Q16,17 14,14 L14,10"/><path d="M19,11 L19,16 Q19,19 22,19 Q25,19 25,16 L25,11 M22,19 L22,31"/><path d="M29,11 L29,31"/></g><line x1="8" y1="33" x2="33" y2="12" stroke="#a9a9ae" stroke-width="2"/><circle cx="20" cy="22" r="3.3" fill="#7a8484"/></svg>
<div class="row" style="top:1268.0px;background:#ffffff"></div>
<div class="cb" style="top:1292.0px"></div>
<div class="t" style="left:477.0px;top:1281.7px;font-size:17.3px;">A Percect Pair Keg - (1 g)</div>
<div class="t" style="left:747.0px;top:1281.7px;font-size:17.3px;">1 g</div>
<div class="t" style="left:1095.0px;width:600px;text-align:center;top:1279.1px;font-size:17.3px;">Batches</div>
<div class="abs" style="left:1725px;top:1279.1px;width:108px;height:22px;overflow:hidden"><div class="t" style="left:0;top:0;font-size:17.3px">Jan 24, 2024, 6:00 PM</div></div>
<div class="abs" style="left:403px;top:1276.0px;width:40px;height:39px;background:#f4f4f7"></div>
<svg class="abs" style="left:403px;top:1276.0px" width="40" height="39" viewBox="0 0 40 39"><g fill="none" stroke="#cfcfd3" stroke-width="2.2"><path d="M13,10 L13,14 Q10,17 10,21 L10,32 L16,32 L16,21 Q16,17 14,14 L14,10"/><path d="M19,11 L19,16 Q19,19 22,19 Q25,19 25,16 L25,11 M22,19 L22,31"/><path d="M29,11 L29,31"/></g><line x1="8" y1="33" x2="33" y2="12" stroke="#a9a9ae" stroke-width="2"/><circle cx="20" cy="22" r="3.3" fill="#7a8484"/></svg>
<div class="row" style="top:1339.0px;background:#f9f9f9"></div>
<div class="cb" style="top:1363.0px"></div>
<div class="t" style="left:477.0px;top:1352.7px;font-size:17.3px;">A Perfect Pair - Keg - (12200</div>
<div class="t" style="left:477.0px;top:1378.2px;font-size:17.3px;">ml) - (batch)</div>
<div class="t" style="left:747.0px;top:1352.7px;font-size:17.3px;">12200 ml</div>
<div class="t" style="left:1095.0px;width:600px;text-align:center;top:1350.1px;font-size:17.3px;">Unknown</div>
<div class="t" style="right:415.0px;top:1352.7px;font-size:17.3px;">0.2</div>
<div class="abs" style="left:1725px;top:1350.1px;width:108px;height:22px;overflow:hidden"><div class="t" style="left:0;top:0;font-size:17.3px">Apr 2, 2024, 4:00 PM</div></div>
<div class="t" style="right:31.0px;top:1352.7px;font-size:17.3px;">0.2</div>
<div class="abs" style="left:403px;top:1347.0px;width:40px;height:39px;background:#f4f4f7"></div>
<svg class="abs" style="left:403px;top:1347.0px" width="40" height="39" viewBox="0 0 40 39"><g fill="none" stroke="#cfcfd3" stroke-width="2.2"><path d="M13,10 L13,14 Q10,17 10,21 L10,32 L16,32 L16,21 Q16,17 14,14 L14,10"/><path d="M19,11 L19,16 Q19,19 22,19 Q25,19 25,16 L25,11 M22,19 L22,31"/><path d="M29,11 L29,31"/></g><line x1="8" y1="33" x2="33" y2="12" stroke="#a9a9ae" stroke-width="2"/><circle cx="20" cy="22" r="3.3" fill="#7a8484"/></svg>
<div class="abs" style="left:324px;top:345px;width:34px;height:70px;background:#0073ea;border-radius:7px 7px 0 0"></div>
<svg class="abs" style="left:330px;top:376px" width="22" height="14" viewBox="330 376 22 14"><path d="M334.6,380.4 L347,380.4 L340.8,386.8 Z" fill="#fff"/></svg>
<div class="abs" style="left:324px;top:1410px;width:1648px;height:13px;background:#fff"></div>
<svg class="abs" style="left:415px;top:1412px" width="14" height="12" viewBox="0 0 14 12"><rect x="6" y="2" width="2" height="6" fill="#9a9a9a"/><rect x="5" y="8" width="4" height="3" fill="#d04040"/></svg>
<div class="abs" style="left:324px;top:1422.4px;width:1648px;height:44.6px;background:#e9e9e9;border-bottom:2px solid #6f6f6f;box-shadow:0 1px 2px rgba(0,0,0,.15)"></div>
<div class="t" style="left:477.0px;top:1436.4px;font-size:17px;font-weight:bold;color:#1f1f1f">Total:</div>
<div class="abs" style="left:197.5px;top:409px;width:450.5px;height:706.3px;background:#fff;border-radius:7px;border:1px solid #e4e4e4;box-shadow:0 8px 28px rgba(0,0,0,.16),0 2px 6px rgba(0,0,0,.06)"></div>
<svg class="abs" style="left:410px;top:398px" width="26" height="14" viewBox="410 398 26 14"><path d="M414,410 L423,401.6 L432,410 Z" fill="#fff" stroke="#dcdcdc" stroke-width="1"/><rect x="412" y="409.6" width="22" height="3" fill="#fff"/></svg>

<svg class="abs" style="left:300px;top:500px" width="250" height="520" viewBox="300 500 250 520">
<defs>
<linearGradient id="amb" x1="0" x2="1" y1="0" y2="0">
<stop offset="0" stop-color="#c98f2c"/><stop offset=".18" stop-color="#e2a83a"/><stop offset=".5" stop-color="#f0bb48"/><stop offset=".82" stop-color="#e4aa3c"/><stop offset="1" stop-color="#c48a2a"/></linearGradient>
<linearGradient id="pale" x1="0" x2="1" y1="0" y2="0">
<stop offset="0" stop-color="#dcc27a"/><stop offset=".3" stop-color="#f3e2a2"/><stop offset=".55" stop-color="#fbf0c6"/><stop offset="1" stop-color="#dfc67e"/></linearGradient>
<linearGradient id="glass" x1="0" x2="1" y1="0" y2="0">
<stop offset="0" stop-color="#d9d9d4"/><stop offset=".4" stop-color="#f7f7f5"/><stop offset="1" stop-color="#d8d8d2"/></linearGradient>
<linearGradient id="base" x1="0" x2="0" y1="0" y2="1">
<stop offset="0" stop-color="#e9c566"/><stop offset=".5" stop-color="#e6d28e"/><stop offset="1" stop-color="#d8cfa0"/></linearGradient>
<radialGradient id="shd" cx=".5" cy=".5" r=".5"><stop offset="0" stop-color="#000" stop-opacity=".14"/><stop offset="1" stop-color="#000" stop-opacity="0"/></radialGradient>
</defs>
<ellipse cx="423" cy="994" rx="95" ry="9" fill="url(#shd)"/>
<path d="M346.3,748 C346.5,714 366,691 385,681 L460.5,681 C480,691 499.5,714 499.7,748 L500.5,962 C501,980 496,990 486,994 Q423,999 360,994 C350,990 346,980 346.5,962 Z" fill="url(#amb)"/>
<path d="M346.6,958 L500.4,958 L500.5,962 C501,980 496,990 486,994 Q423,999 360,994 C350,990 346,980 346.5,962 Z" fill="url(#base)"/>
<path d="M350,982 C380,974 465,974 497,982 C494,989 490,992 486,994 Q423,999 360,994 C355,992 352,988 350,982 Z" fill="#d2c48e" opacity=".7"/>
<path d="M365,985 C400,978 445,978 482,985" stroke="#8d6f3a" stroke-width="2" fill="none" opacity=".6"/>
<ellipse cx="400" cy="971" rx="10" ry="3" fill="none" stroke="#6d6040" stroke-width="1.5" opacity=".6"/>
<ellipse cx="446" cy="971" rx="10" ry="3" fill="none" stroke="#6d6040" stroke-width="1.5" opacity=".6"/>
<rect x="385" y="628" width="75.5" height="53" fill="url(#pale)"/>
<rect x="385" y="680" width="75.5" height="2" fill="#8a7444" opacity=".7"/>
<path d="M397.5,595 L449.5,595 C452,605 460.5,615 460.5,628 L385,628 C385,615 395,605 397.5,595 Z" fill="url(#glass)"/>
<rect x="385" y="627" width="75.5" height="1.6" fill="#7e7455" opacity=".7"/>
<path d="M397.3,529 Q397.3,524 402.3,524 L443.8,524 Q448.8,524 448.8,529 L449.5,595 L397.5,595 Z" fill="#363636"/>
<rect x="397.3" y="524" width="51.5" height="17" rx="4" fill="#2b2b2b"/>
<g fill="#e8e8e8" font-family="Liberation Serif" font-size="4" text-anchor="middle"><text x="436" y="552">J.&amp;A.</text><text x="436" y="558">MITCHELL</text><text x="436" y="564">&amp; CO. LTD</text></g>
<g fill="#9a6e22" font-family="Liberation Serif" font-weight="bold" text-anchor="middle" opacity=".85"><text x="423" y="716" font-size="12" letter-spacing="1">SPRINGBANK</text><text x="423" y="724" font-size="7" letter-spacing="2">DISTILLERY</text></g>
<rect x="357.5" y="742" width="132" height="198" fill="#2a2522"/>
<g font-family="Liberation Sans" text-anchor="middle">
<text x="423" y="760" font-size="7" font-weight="bold" fill="#d9cbb0" letter-spacing=".6">ESTABLISHED 1828</text>
<text x="425" y="833" font-size="62" font-family="Liberation Serif" font-style="italic" font-weight="bold" fill="#d2692c">S</text>
<text x="423.5" y="849" font-size="12.5" font-family="Liberation Serif" font-weight="bold" fill="#ece6dc">SPRINGBANK</text>
<text x="423.5" y="865" font-size="6" fill="#c96a30"><tspan>AGED </tspan><tspan font-size="13" font-weight="bold" font-family="Liberation Serif">10</tspan><tspan> YEARS</tspan></text>
<text x="423.5" y="874.5" font-size="6" fill="#a5896a" letter-spacing=".8">CAMPBELTOWN</text>
<text x="423.5" y="885.5" font-size="8" font-weight="bold" fill="#ece6dc" letter-spacing=".6">SINGLE MALT</text>
<text x="380" y="932" font-size="6.5" fill="#b7a78c">750ml</text>
<text x="452" y="932" font-size="6.5" fill="#b7a78c">46%alc/vol</text>
</g>
<g font-family="Liberation Sans" font-size="4.2" fill="#8d8378">
<text transform="translate(367,920) rotate(-90)">CAMPBELTOWN SINGLE MALT SCOTCH WHISKY</text>
<text transform="translate(372,900) rotate(-90)">PRODUCT OF SCOTLAND</text>
<text transform="translate(478,910) rotate(-90)">DISTILLED &amp; BOTTLED BY</text>
<text transform="translate(483,925) rotate(-90)">J.&amp;A. MITCHELL &amp; CO. CAMPBELTOWN SCOTLAND</text>
</g>
</svg>
<div class="abs" style="left:427px;top:403px;width:175px;height:27px;background:#545454;border-radius:2px;box-shadow:0 1px 3px rgba(0,0,0,.2)"></div>
<div class="t" style="left:436.5px;top:407.9px;font-size:17px;color:#f2f2f2">5bae82752b37b.png</div>
<div class="abs" style="left:284px;top:75px;width:1px;height:1429px;background:#fff"></div>
<div class="abs" style="left:285px;top:1502px;width:1714px;height:1px;background:#fff"></div>
<div class="abs" style="left:0;top:1503px;width:1999px;height:1px;background:#000"></div>
</body></html>
